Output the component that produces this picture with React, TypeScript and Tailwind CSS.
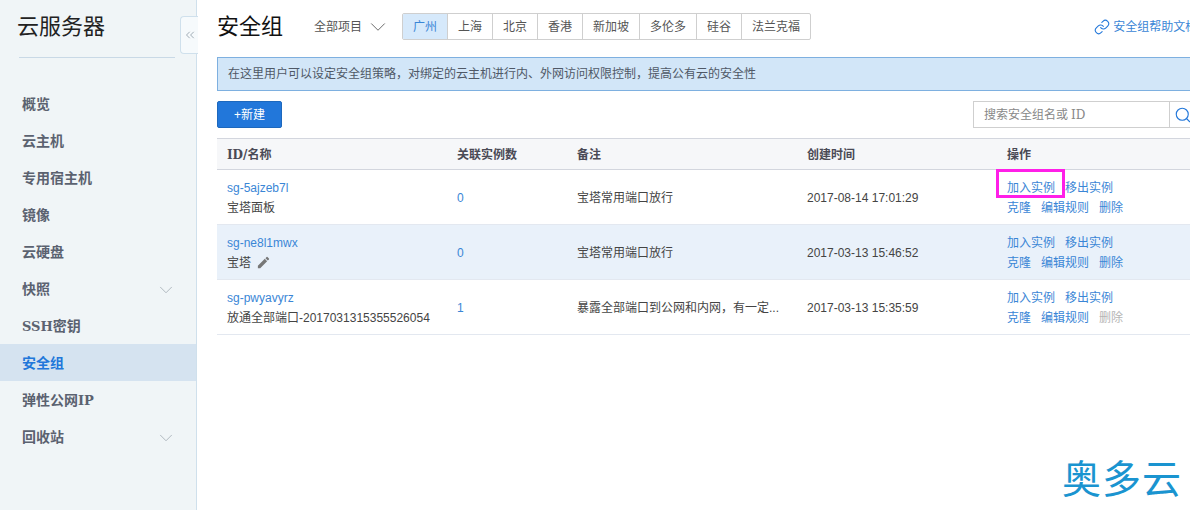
import { ChevronDown, ChevronsLeft, Link, Search } from "lucide-react";
import { MdEdit } from "react-icons/md";

const FONT = { fontFamily: '"Liberation Sans", "Noto Sans CJK SC", sans-serif' };
const SLAB = { fontFamily: '"DejaVu Serif", "Noto Sans CJK SC", serif' };

function Lat({ children }: { children: string }) {
  return <span className="text-[13px]">{children}</span>;
}

const menu = [
  { key: "overview", label: "概览" },
  { key: "cvm", label: "云主机" },
  { key: "host", label: "专用宿主机" },
  { key: "image", label: "镜像" },
  { key: "disk", label: "云硬盘" },
  { key: "snapshot", label: "快照", arrow: true },
  { key: "ssh", label: <><Lat>SSH</Lat>密钥</> },
  { key: "sg", label: "安全组", active: true },
  { key: "eip", label: <>弹性公网<Lat>IP</Lat></> },
  { key: "recycle", label: "回收站", arrow: true },
];

const regions = ["广州", "上海", "北京", "香港", "新加坡", "多伦多", "硅谷", "法兰克福"];

const rows = [
  { id: "sg-5ajzeb7l", name: "宝塔面板", count: "0", note: "宝塔常用端口放行", time: "2017-08-14 17:01:29" },
  { id: "sg-ne8l1mwx", name: "宝塔", count: "0", note: "宝塔常用端口放行", time: "2017-03-13 15:46:52", hover: true },
  { id: "sg-pwyavyrz", name: "放通全部端口-2017031315355526054", count: "1", note: "暴露全部端口到公网和内网，有一定...", time: "2017-03-13 15:35:59", noDelete: true },
];

function Sidebar() {
  return (
    <aside className="relative w-[197px] h-full shrink-0 bg-[#f0f5f7] border-r border-[#cfe0ec]">
      <div className="ml-[19px] h-[58px] w-[156px] border-b border-[#c9d9e6]">
        <p className="-ml-[2px] pt-[11px] text-[22px] leading-[32px] text-[#222]">云服务器</p>
      </div>
      <nav className="mt-[27px]" style={SLAB}>
        {menu.map((m) => (
          <div
            key={m.key}
            className={`flex h-[37px] items-center justify-between pl-[22px] pr-[19px] pt-[2px] text-[14px] font-bold ${
              m.active ? "bg-[#d5e3f0] text-[#2277da]" : "text-[#5b6270]"
            }`}
          >
            <span>{m.label}</span>
            {m.arrow && <ChevronDown size={22} strokeWidth={0.8} className="text-[#9aa3ab]" />}
          </div>
        ))}
      </nav>
      <div className="absolute left-[180px] top-[16px] flex h-[38px] w-[18px] items-center justify-center rounded-l-[4px] border border-r-0 border-[#cfe0ec] bg-[#f6fafc]">
        <ChevronsLeft size={14} strokeWidth={1.4} className="text-[#8d9aa5]" />
      </div>
    </aside>
  );
}

function Main() {
  return (
    <main className="w-[1040px] shrink-0 pl-[20px] text-[12px] text-[#444]">
      <div className="flex h-[57px] items-center pb-[4px]">
        <h1 className="w-[97px] shrink-0 text-[22px] leading-[32px] text-[#111]">安全组</h1>
        <div className="flex w-[88px] shrink-0 items-center text-[#555]">
          <span>全部项目</span>
          <ChevronDown size={26} strokeWidth={0.8} className="ml-[3px] text-[#555]" />
        </div>
        <div className="flex h-[27px] overflow-hidden rounded-[2px] border border-[#cfcfcf]">
          {regions.map((r, i) => (
            <div
              key={r}
              className={`flex items-center px-[10px] ${i > 0 ? "border-l border-[#cfcfcf] text-[#555]" : "bg-[#d6e9fb] text-[#3a86d6] outline outline-[#7eaee0]"}`}
            >
              {r}
            </div>
          ))}
        </div>
        <div className="ml-[283px] flex items-center gap-[3px] whitespace-nowrap text-[#3a86d6]">
          <Link size={16} strokeWidth={1.6} className="text-[#2277da]" />
          <span>安全组帮助文档</span>
        </div>
      </div>

      <div className="flex h-[34px] w-[1000px] items-center border border-[#7eb0e0] bg-[#d2e6f8] pl-[10px] text-[#4f5866]">
        在这里用户可以设定安全组策略，对绑定的云主机进行内、外网访问权限控制，提高公有云的安全性
      </div>

      <div className="mt-[10px] flex h-[28px] items-start justify-between">
        <button className="h-[27px] w-[65px] rounded-[2px] border border-[#1d68bd] bg-[#2277da] text-[12px] text-white">
          +新建
        </button>
        <div className="mr-[14px] flex h-[27px] w-[250px] border border-[#cfcfcf]">
          <div className="flex w-[195px] items-center pl-[10px] text-[#888]">
            搜索安全组名或 <span className="ml-[3px]" style={SLAB}>ID</span>
          </div>
          <div className="flex flex-1 items-center border-l border-[#cfcfcf] pl-[4px]">
            <Search size={18} strokeWidth={1.5} className="text-[#2277da]" />
          </div>
        </div>
      </div>

      <div className="mt-[9px] w-[1000px]">
        <div
          className="grid h-[32px] grid-cols-[230px_120px_230px_200px_1fr] items-center border-y border-[#d3d6de] bg-[#f6f7f9] pl-[10px] pt-[1px] font-bold text-[#4a4a55]"
          style={SLAB}
        >
          <span>ID/名称</span>
          <span>关联实例数</span>
          <span>备注</span>
          <span>创建时间</span>
          <span>操作</span>
        </div>
        {rows.map((r) => (
          <div
            key={r.id}
            className={`grid h-[55px] grid-cols-[230px_120px_230px_200px_1fr] items-center border-b border-[#e3e8f0] pl-[10px] pt-[1px] ${r.hover ? "bg-[#e9f1fa]" : ""}`}
          >
            <div className="leading-[20px]">
              <p className="text-[#3a86d6]">{r.id}</p>
              <p className="flex items-center gap-[5px]">
                {r.name}
                {r.hover && <MdEdit size={15} className="text-[#777]" />}
              </p>
            </div>
            <span className="text-[#3a86d6]">{r.count}</span>
            <span>{r.note}</span>
            <span>{r.time}</span>
            <div className="pt-[1px] leading-[20px] text-[#3a86d6]">
              <p className="flex gap-[10px]">
                <span>加入实例</span>
                <span>移出实例</span>
              </p>
              <p className="flex gap-[10px]">
                <span>克隆</span>
                <span>编辑规则</span>
                <span className={r.noDelete ? "text-[#b5b5b5]" : ""}>删除</span>
              </p>
            </div>
          </div>
        ))}
      </div>
    </main>
  );
}

export default function App() {
  return (
    <div className="relative flex h-[510px] w-[1190px] overflow-hidden bg-white" style={FONT}>
      <Sidebar />
      <Main />
      {/* annotation added on top of the screenshot */}
      <div className="absolute left-[996px] top-[169px] h-[29px] w-[69px] border-[3px] border-[#ff1fe8]" />
      <div className="absolute left-[1062px] top-[455px] text-[39px] font-normal leading-[50px] tracking-[1px] text-[#1a94d0]">
        奥多云
      </div>
    </div>
  );
}
